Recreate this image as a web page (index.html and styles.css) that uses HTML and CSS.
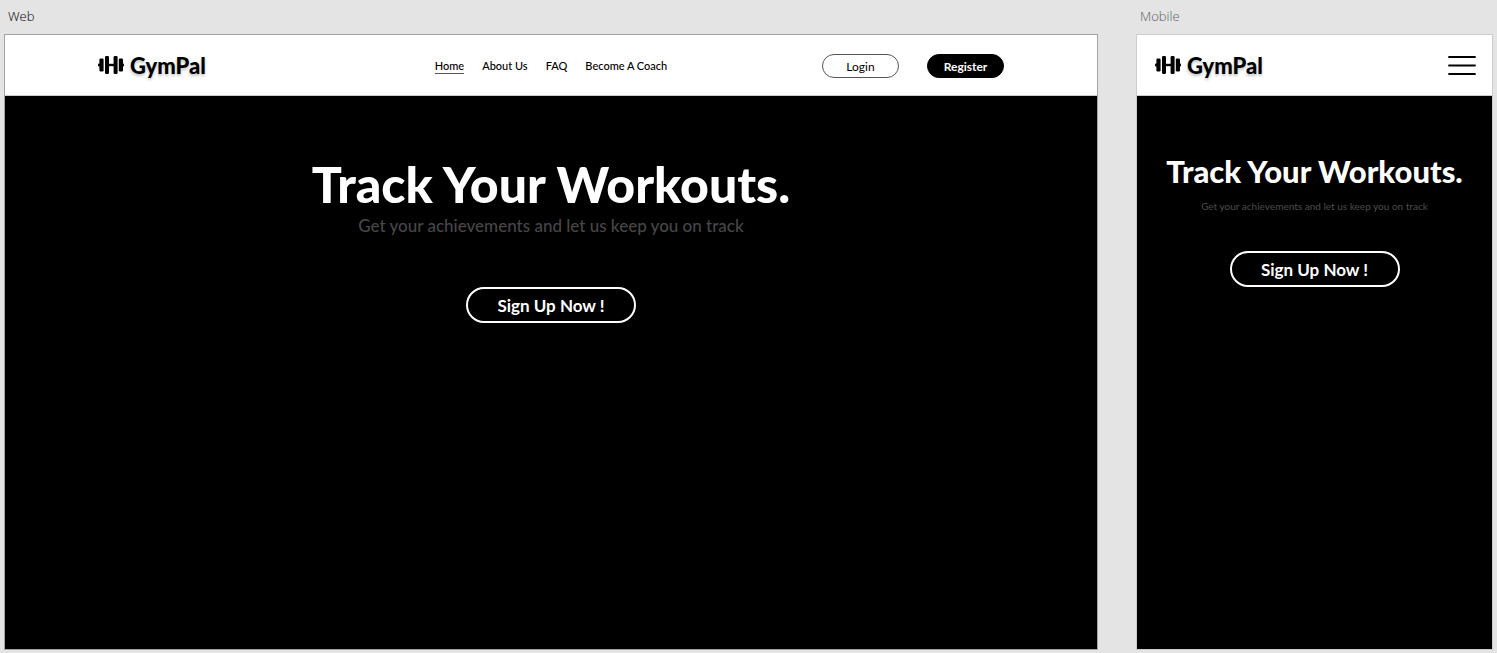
FILE: index.html
```html
<!DOCTYPE html>
<html lang="en">
<head>
<meta charset="utf-8">
<meta name="viewport" content="width=device-width, initial-scale=1">
<title>GymPal</title>
<link rel="stylesheet" href="styles.css">
</head>
<body>
<svg width="0" height="0" class="defs" aria-hidden="true">
  <symbol id="dumbbell" viewBox="0 0 26 20">
    <rect x="0" y="7.5" width="2.5" height="3" rx="1"/>
    <rect x="1.4" y="2.5" width="4.2" height="13" rx="1.2"/>
    <rect x="7" y="0" width="4" height="18" rx="1.2"/>
    <rect x="10" y="7.8" width="6" height="2.4"/>
    <rect x="15.6" y="0" width="4" height="18" rx="1.2"/>
    <rect x="20.8" y="2.5" width="4.2" height="13" rx="1.2"/>
    <rect x="23.5" y="7.5" width="2.5" height="3" rx="1"/>
  </symbol>
</svg>
<main class="canvas">
  <section class="artboard artboard-web">
    <h2 class="label">Web</h2>
    <div class="frame">
      <header class="bar">
        <a class="logo" href="#"><svg class="logo-icon" aria-hidden="true"><use href="#dumbbell"/></svg><span class="logo-name">GymPal</span></a>
        <nav class="nav">
          <a class="nav-link active" href="#">Home</a>
          <a class="nav-link" href="#">About Us</a>
          <a class="nav-link" href="#">FAQ</a>
          <a class="nav-link" href="#">Become A Coach</a>
        </nav>
        <div class="actions">
          <button class="pill" type="button">Login</button>
          <button class="pill pill-dark" type="button">Register</button>
        </div>
      </header>
      <div class="hero">
        <h1 class="title">Track Your Workouts.</h1>
        <p class="tagline">Get your achievements and let us keep you on track</p>
        <button class="cta" type="button">Sign Up Now !</button>
      </div>
    </div>
  </section>
  <section class="artboard artboard-mobile">
    <h2 class="label">Mobile</h2>
    <div class="frame">
      <header class="bar">
        <a class="logo" href="#"><svg class="logo-icon" aria-hidden="true"><use href="#dumbbell"/></svg><span class="logo-name">GymPal</span></a>
        <button class="menu" type="button" aria-label="Menu">
          <svg width="28" height="20" viewBox="0 0 28 20" aria-hidden="true"><path d="M1 1h26M1 9.5h26M1 18h26" stroke="#000" stroke-width="1.8" stroke-linecap="round"/></svg>
        </button>
      </header>
      <div class="hero">
        <h1 class="title">Track Your Workouts.</h1>
        <p class="tagline">Get your achievements and let us keep you on track</p>
        <button class="cta" type="button">Sign Up Now !</button>
      </div>
    </div>
  </section>
</main>
</body>
</html>
```
FILE: styles.css
```css
* { box-sizing: border-box; }
body {
  margin: 0;
  background: #e4e4e4;
  color: #000;
  font-family: Lato, "Liberation Sans", sans-serif;
}
h1, h2, p { margin: 0; }
a { color: inherit; text-decoration: none; }
button { font-family: inherit; cursor: pointer; }
.defs { position: absolute; }
.canvas {
  display: grid;
  grid-template-columns: 1094fr 357fr;
  gap: 38px;
  min-height: 100vh;
  padding: 0 4px 3px;
}
.artboard { display: flex; flex-direction: column; min-width: 0; }
.label {
  height: 34px;
  padding-left: 4px;
  font: 300 13px/33px "Open Sans", "Noto Sans", sans-serif;
}
.artboard-mobile .label { color: #606060; }
.frame {
  flex: 1;
  display: flex;
  flex-direction: column;
  background: #000;
  border: 1px solid #a3a3a3;
}
.artboard-mobile .frame { border-color: #ccc; }
.bar {
  display: grid;
  grid-template-columns: 1fr auto 1fr;
  align-items: center;
  height: 61px;
  padding: 2px 93px 0;
  background: #fff;
  border-bottom: 1px solid #ccc;
}
.artboard-mobile .bar {
  grid-template-columns: 1fr auto;
  padding: 2px 16px 0 18px;
}
.logo { display: flex; align-items: center; gap: 6px; }
.logo-icon { width: 26px; height: 20px; }
.logo-name {
  font-size: 22px;
  font-weight: 900;
  line-height: 26px;
  text-shadow: 0 2px 3px rgba(0, 0, 0, .25);
}
.nav { display: flex; gap: 18px; font-size: 11px; font-weight: 500; line-height: 14px; }
.nav-link { border-bottom: 1px solid transparent; }
.nav-link.active { border-color: #555; }
.actions { display: flex; justify-content: flex-end; gap: 28px; }
.pill {
  width: 77px;
  height: 24px;
  padding: 0;
  border: 1px solid #555;
  border-radius: 12px;
  background: #fff;
  color: #000;
  font-size: 12px;
}
.pill-dark { border-color: #000; background: #000; color: #fff; font-weight: 700; }
.menu { display: flex; padding: 0; border: 0; background: none; }
.hero {
  display: flex;
  flex-direction: column;
  align-items: center;
  padding-top: 58px;
  color: #fff;
  text-align: center;
}
.title { font-size: 50px; font-weight: 900; line-height: 60px; white-space: nowrap; }
.tagline { color: #474747; font-size: 17px; font-weight: 500; line-height: 24px; white-space: nowrap; }
.cta {
  width: 170px;
  height: 36px;
  margin-top: 49px;
  padding: 0;
  border: 2px solid #fff;
  border-radius: 18px;
  background: #000;
  color: #fff;
  font-size: 17px;
  font-weight: 700;
}
.artboard-mobile .hero { padding-top: 55px; }
.artboard-mobile .title { font-size: 31px; line-height: 40px; }
.artboard-mobile .tagline { margin-top: 8px; font-size: 10px; line-height: 14px; }
.artboard-mobile .cta { margin-top: 38px; }
```
